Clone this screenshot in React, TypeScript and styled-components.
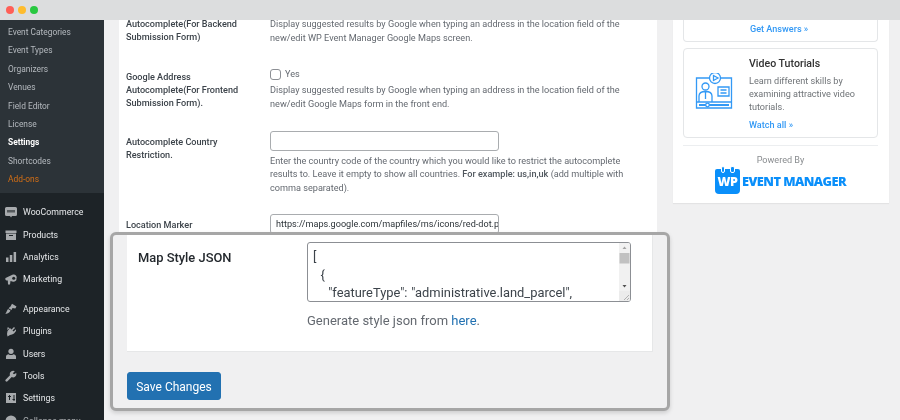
import React from "react";
import styled, { createGlobalStyle } from "styled-components";

const Global = createGlobalStyle`
  html, body { margin: 0; padding: 0; background: #f0f0f1; }
  body { font-family: Roboto, "Liberation Sans", sans-serif; }
  * { box-sizing: border-box; }
`;

const Frame = styled.div`
  position: relative;
  width: 900px;
  height: 420px;
  overflow: hidden;
  display: flex;
  flex-direction: column;
  background: #f0f0f1;
  filter: blur(0.4px);
`;
const TitleBar = styled.div`
  flex: none;
  height: 20px;
  display: flex;
  align-items: center;
  gap: 4px;
  padding-left: 6px;
  background: #dcddde;
`;
const Dot = styled.span<{ $c: string }>`
  width: 8px;
  height: 8px;
  border-radius: 50%;
  background: ${(p) => p.$c};
`;
const Body = styled.div`
  flex: 1;
  min-height: 0;
  display: flex;
  align-items: flex-start;
`;
const Sidebar = styled.nav`
  flex: none;
  width: 104px;
  height: 420px;
  background: #1d2327;
  display: flex;
  flex-direction: column;
`;
const SubMenu = styled.div`
  flex: none;
  height: 173px;
  padding-top: 3px;
  background: #2c3338;
  display: flex;
  flex-direction: column;
`;
const SubItem = styled.div<{ $active?: boolean; $orange?: boolean }>`
  height: 18.4px;
  line-height: 18.4px;
  padding-left: 8px;
  font-size: 8.4px;
  font-weight: ${(p) => (p.$active ? 700 : 400)};
  color: ${(p) => (p.$orange ? "#d46f15" : p.$active ? "#fff" : "#b4b9be")};
`;
const MenuGroup = styled.div<{ $top: number }>`
  display: flex;
  flex-direction: column;
  padding-top: ${(p) => p.$top}px;
`;
const MenuItem = styled.div<{ $dim?: boolean }>`
  height: 22.4px;
  display: flex;
  align-items: center;
  gap: 6px;
  padding-left: 5px;
  font-size: 8.75px;
  color: ${(p) => (p.$dim ? "#a7aaad" : "#e6e8ea")};
  svg { flex: none; width: 12px; height: 12px; fill: #a7aaad; }
`;
const Main = styled.div`
  flex: none;
  width: 538px;
  height: 300px;
  margin-left: 15px;
  padding-left: 7px;
  background: #fff;
  overflow: hidden;
`;
const Row = styled.div<{ $h: number; $top?: number }>`
  display: grid;
  grid-template-columns: 144px 380px;
  height: ${(p) => p.$h}px;
  margin-top: ${(p) => p.$top ?? 0}px;
`;
const Label = styled.div<{ $top?: number }>`
  font-size: 9.1px;
  line-height: 13px;
  font-weight: 500;
  color: #3c434a;
  margin-top: ${(p) => p.$top ?? 0}px;
`;
const Field = styled.div`
  display: flex;
  flex-direction: column;
  align-items: flex-start;
`;
const Desc = styled.div<{ $top?: number }>`
  font-size: 9.15px;
  line-height: 13.8px;
  color: #646970;
  margin-top: ${(p) => p.$top ?? 0}px;
  white-space: nowrap;
  b { font-weight: 500; color: #50575e; }
`;
const CheckRow = styled.label`
  display: flex;
  align-items: center;
  gap: 4px;
  font-size: 9.1px;
  line-height: 12px;
  color: #646970;
  margin-top: -3px;
`;
const Check = styled.span`
  width: 11px;
  height: 11px;
  border: 1px solid #8c8f94;
  border-radius: 3px;
  background: #fff;
`;
const TextInput = styled.div<{ $top: number }>`
  width: 229px;
  height: 20px;
  margin-top: ${(p) => p.$top}px;
  padding: 0 5px;
  border: 1px solid #a9acaf;
  border-radius: 3px;
  background: #fff;
  font-size: 9.1px;
  line-height: 18px;
  color: #2c3338;
  white-space: nowrap;
  overflow: hidden;
`;
const Aside = styled.aside`
  flex: none;
  width: 216px;
  height: 183px;
  margin-left: 16px;
  padding: 0 11px 0 10px;
  background: #fff;
  box-shadow: 0 1px 1px rgba(0, 0, 0, 0.05);
  display: flex;
  flex-direction: column;
`;
const Card = styled.div<{ $clipped?: boolean }>`
  border: 1px solid #e4e6e8;
  border-radius: 4px;
  ${(p) => (p.$clipped ? "border-top: 0; border-radius: 0 0 4px 4px; height: 21.5px; padding: 3px 0 0 66px;" : "height: 90px; margin-top: 6.5px; padding: 8px 10px 0 65px; position: relative;")}
`;
const CardTitle = styled.div`
  font-size: 10.6px;
  line-height: 14px;
  font-weight: 500;
  color: #333;
`;
const CardText = styled.div`
  font-size: 9.1px;
  line-height: 13.2px;
  color: #6f7377;
  margin-top: 4px;
`;
const CardLink = styled.div`
  font-size: 9.1px;
  line-height: 13px;
  font-weight: 500;
  color: #3399f5;
`;
const CardLinkSpaced = styled(CardLink)`
  margin-top: 4.5px;
`;
const VideoIcon = styled.svg`
  position: absolute;
  left: 11px;
  top: 24px;
  width: 38px;
  height: 38px;
`;
const Divider = styled.div`
  height: 1px;
  margin-top: 7px;
  background: #eceef0;
`;
const Powered = styled.div`
  margin-top: 8px;
  text-align: center;
  font-size: 9.1px;
  line-height: 13px;
  color: #8a8d90;
`;
const Logo = styled.div`
  padding-left: 32px;
  display: flex;
  align-items: center;
  gap: 2px;
  height: 27px;
`;
const LogoMark = styled.div`
  position: relative;
  width: 25px;
  height: 25px;
  margin-top: 1px;
  padding-top: 5px;
  border-radius: 2px 2px 4px 4px;
  background: #0a8ffa;
  color: #fff;
  font-family: "Open Sans", sans-serif;
  font-size: 12.5px;
  line-height: 16px;
  font-weight: 800;
  text-align: center;
  letter-spacing: -0.5px;
  &::before, &::after {
    content: "";
    position: absolute;
    top: -2.5px;
    width: 2.5px;
    height: 5px;
    border-radius: 2px;
    background: #0a8ffa;
    border: 0.5px solid #fff;
  }
  &::before { left: 5.5px; }
  &::after { right: 5.5px; }
`;
const LogoWord = styled.div`
  font-family: "Open Sans", sans-serif;
  font-size: 12.8px;
  line-height: 16px;
  font-weight: 800;
  color: #0a8ffa;
  letter-spacing: -0.55px;
  white-space: nowrap;
`;
const Highlight = styled.section`
  position: absolute;
  left: 110px;
  top: 232px;
  width: 560px;
  height: 179px;
  padding: 0 14px;
  border: 3.4px solid #a6a6a6;
  border-radius: 6px;
  background: #f0f0f1;
  box-shadow: 0 2px 4px rgba(0, 0, 0, 0.15);
`;
const SettingCard = styled.div`
  width: 526px;
  height: 117px;
  padding: 7px 0 0 11px;
  background: #fff;
  border-bottom: 1px solid #e6e7e8;
  border-right: 1px solid #e6e7e8;
  display: grid;
  grid-template-columns: 169px 324px;
`;
const BigLabel = styled.div`
  font-size: 12.9px;
  line-height: 18px;
  font-weight: 500;
  color: #23282d;
  padding-top: 7px;
`;
const TextBox = styled.div`
  position: relative;
  width: 324px;
  height: 60px;
  padding: 5px 0 0 5px;
  border: 1px solid #8c8f94;
  border-radius: 3px;
  overflow: hidden;
  background: #fff;
  font-size: 12.9px;
  line-height: 18px;
  word-spacing: 0.6px;
  color: #3c434a;
  white-space: pre;
`;
const Rail = styled.svg`
  position: absolute;
  right: 0;
  top: 0;
  width: 11px;
  height: 58px;
`;
const Help = styled.div`
  margin-top: 10px;
  font-size: 13px;
  line-height: 18px;
  color: #646970;
  a { color: #2271b1; text-decoration: none; }
`;
const SaveButton = styled.button`
  display: block;
  width: 94px;
  height: 28px;
  margin-top: 20px;
  padding: 1px 0 0;
  border: 1px solid #2271b1;
  border-radius: 3px;
  background: #2271b1;
  color: #fff;
  font-family: inherit;
  font-size: 12px;
`;

const icons: Record<string, React.ReactNode> = {
  woo: (
    <svg viewBox="0 0 12 12"><path d="M1.5 1h9A1.5 1.5 0 0 1 12 2.5v6A1.5 1.5 0 0 1 10.500 10H7l-1 1.500L5 10H1.500A1.500 1.500 0 0 1 0 8.500v-6A1.500 1.500 0 0 1 1.500 1z" /><path d="M2 4h8v2.500H2z" fill="#1d2327" opacity=".6" /></svg>
  ),
  box: (
    <svg viewBox="0 0 12 12"><path d="M.5 1.500h11V4H.5zM1 4.500h10v6.500H1z" /><path d="M4 6h4v1H4z" fill="#1d2327" /></svg>
  ),
  bars: (
    <svg viewBox="0 0 12 12"><path d="M1 6.500h2.500V11H1zM4.800 4h2.500v7H4.800zM8.600 1h2.500v10H8.600z" /></svg>
  ),
  mega: (
    <svg viewBox="0 0 12 12"><path d="M.5 5 8 1.500a3 3 0 0 1 3.500 4A3 3 0 0 1 8 8.800L5.500 8 5 11.500H3L2.800 7.500H1.500A2 2 0 0 1 .5 5z" /><circle cx="8.700" cy="5.200" r="1.500" fill="#1d2327" /></svg>
  ),
  brush: (
    <svg viewBox="0 0 12 12"><path d="M7 .8l4.500 2.700-1.200 2L7.500 5l-1 2-3-1.700L5.500 3.500zM3 6l2.500 1.500-.5 1C4 10 2 10.800.3 10.800 1.500 9.500 1.800 7.800 3 6z" /></svg>
  ),
  plug: (
    <svg viewBox="0 0 12 12"><path d="M5 3l1.500 1.500L9 2l1 1-2.500 2.500 1 1L11 4.300V6L9 8.500 7 9.500l-2 .5-2.500 1.500L2 9l.5-3zM2 5l.8-3 1.700 1.200z" /></svg>
  ),
  user: (
    <svg viewBox="0 0 12 12"><circle cx="6" cy="3.300" r="2.600" /><path d="M1 11V8.500C1 7 3 6.200 3.500 6.200c1.500 1.200 3.500 1.200 5 0 .5 0 2.500.8 2.500 2.300V11z" /></svg>
  ),
  tool: (
    <svg viewBox="0 0 12 12"><path d="M8 .7a3.300 3.300 0 0 0-3 4.500L.8 9.500a1.200 1.200 0 0 0 1.700 1.800l4.200-4.200a3.300 3.300 0 0 0 4.500-4L9 4.300 7.800 3.200l2-2A3 3 0 0 0 8 .7z" /></svg>
  ),
  sliders: (
    <svg viewBox="0 0 12 12"><path d="M1 1h10v10H1zM3 4v1h1v3h1V5h1V4H5V3H4v1zM7.500 7v1h1v1h1V8h.5V7h-.5V3h-1v4z" fillRule="evenodd" /></svg>
  ),
  collapse: (
    <svg viewBox="0 0 12 12"><circle cx="6" cy="6" r="5.500" /></svg>
  ),
};

const subItems = ["Event Categories", "Event Types", "Organizers", "Venues", "Field Editor", "License"];
const firstGroup: [string, string][] = [["woo", "WooCommerce"], ["box", "Products"], ["bars", "Analytics"], ["mega", "Marketing"]];
const secondGroup: [string, string][] = [["brush", "Appearance"], ["plug", "Plugins"], ["user", "Users"], ["tool", "Tools"], ["sliders", "Settings"]];

export default function App() {
  return (
    <>
      <Global />
      <Frame>
        <TitleBar>
          <Dot $c="#ff5f57" />
          <Dot $c="#febc2e" />
          <Dot $c="#28c840" />
        </TitleBar>
        <Body>
          <Sidebar>
            <SubMenu>
              {subItems.map((s) => <SubItem key={s}>{s}</SubItem>)}
              <SubItem $active>Settings</SubItem>
              <SubItem>Shortcodes</SubItem>
              <SubItem $orange>Add-ons</SubItem>
            </SubMenu>
            <MenuGroup $top={8}>
              {firstGroup.map(([i, t]) => <MenuItem key={t}>{icons[i]}{t}</MenuItem>)}
            </MenuGroup>
            <MenuGroup $top={7}>
              {secondGroup.map(([i, t]) => <MenuItem key={t}>{icons[i]}{t}</MenuItem>)}
              <MenuItem $dim>{icons.collapse}Collapse menu</MenuItem>
            </MenuGroup>
          </Sidebar>
          <Main>
            <Row $h={53} $top={-2}>
              <Label>Autocomplete(For Backend<br />Submission Form)</Label>
              <Field>
                <Desc>Display suggested results by Google when typing an address in the location field of the<br />new/edit WP Event Manager Google Maps screen.</Desc>
              </Field>
            </Row>
            <Row $h={65}>
              <Label>Google Address<br />Autocomplete(For Frontend<br />Submission Form).</Label>
              <Field>
                <CheckRow><Check />Yes</CheckRow>
                <Desc $top={4}>Display suggested results by Google when typing an address in the location field of the<br />new/edit Google Maps form in the front end.</Desc>
              </Field>
            </Row>
            <Row $h={84}>
              <Label>Autocomplete Country<br />Restriction.</Label>
              <Field>
                <TextInput $top={-5} />
                <Desc $top={3.5}>Enter the country code of the country which you would like to restrict the autocomplete<br />results to. Leave it empty to show all countries. <b>For example: us,in,uk</b> (add multiple with<br />comma separated).</Desc>
              </Field>
            </Row>
            <Row $h={40}>
              <Label $top={-1}>Location Marker</Label>
              <Field>
                <TextInput $top={-6}>https://maps.google.com/mapfiles/ms/icons/red-dot.png</TextInput>
              </Field>
            </Row>
          </Main>
          <Aside>
            <Card $clipped><CardLink>Get Answers »</CardLink></Card>
            <Card>
              <VideoIcon viewBox="0 0 38 38" fill="none" stroke="#3399f5" strokeWidth="1.3">
                <path d="M14 5H1.500v30h35V5H26" />
                <path d="M1.500 29h35" />
                <circle cx="20" cy="5" r="5.500" />
                <path d="M18.500 2.500 23 5l-4.500 2.500z" />
                <circle cx="10.500" cy="13.500" r="3.500" />
                <path d="M4 29v-6c0-3 3-4.500 6.500-4.500S17 20 17 23v6M10.500 18.500V26" />
                <path d="M23 14h11v9H23zM25.500 17h6M25.500 20h6" />
                <path d="M4 32h30" strokeWidth="2" />
                <circle cx="12.500" cy="32" r="1.800" fill="#fff" />
              </VideoIcon>
              <CardTitle>Video Tutorials</CardTitle>
              <CardText>Learn different skills by<br />examining attractive video<br />tutorials.</CardText>
              <CardLinkSpaced>Watch all »</CardLinkSpaced>
            </Card>
            <Divider />
            <Powered>Powered By</Powered>
            <Logo>
              <LogoMark>WP</LogoMark>
              <LogoWord>EVENT MANAGER</LogoWord>
            </Logo>
          </Aside>
        </Body>
        <Highlight>
          <SettingCard>
            <BigLabel>Map Style JSON</BigLabel>
            <div>
              <TextBox>
                {"[\n  {\n    \"featureType\": \"administrative.land_parcel\","}
                <Rail viewBox="0 0 11 58">
                  <rect width="11" height="58" fill="#f1f1f1" />
                  <path d="M5.500 3.500 7.500 6h-4z" fill="#a3a3a3" />
                  <rect x="0.500" y="10" width="10" height="10.500" fill="#c1c1c1" />
                  <path d="M3.500 42h4l-2 2.500z" fill="#505050" />
                  <rect y="48" width="11" height="10" fill="#ececec" />
                  <path d="M10 52l-5 5M10 55l-2 2" stroke="#9a9a9a" strokeWidth=".7" />
                </Rail>
              </TextBox>
              <Help>Generate style json from <a href="#here">here</a>.</Help>
            </div>
          </SettingCard>
          <SaveButton>Save Changes</SaveButton>
        </Highlight>
      </Frame>
    </>
  );
}
